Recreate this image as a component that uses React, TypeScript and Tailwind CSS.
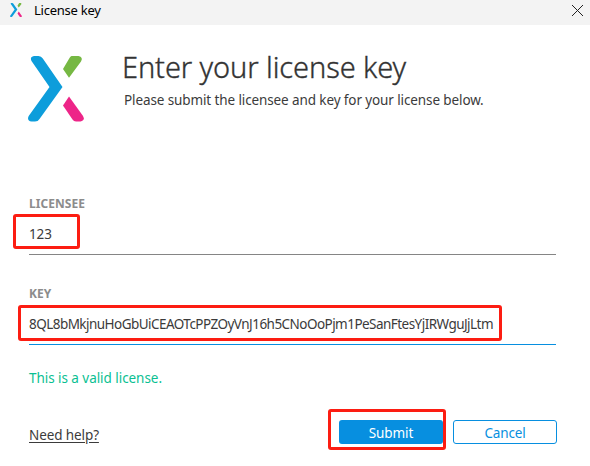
function Logo({ className }: { className: string }) {
  return (
    <svg className={className} viewBox="0 0 56 66" strokeLinejoin="round">
      <path fill="#0d9ddb" d="M6 0h4.500Q13.300 .2 14.800 2.500L34.500 31L11.500 63Q10 65.500 7 65.500H3.500Q-1.500 64.500 .7 60L21.500 31L3.500 5Q1.500 1 6 0Z" />
      <path fill="#76b843" d="M43.500 0H50.500Q55.500 1 53 5.500L41 21.800L35 13L41.500 2Q42.300 .4 43.500 0Z" />
      <path fill="#ed2588" d="M41 40.500L55 60Q57.500 64.500 52.500 65.500H48Q45.800 65.300 44.500 63.500L35 49.500Z" />
    </svg>
  );
}

function Field({ label, value, active }: { label: string; value: string; active?: boolean }) {
  return (
    <label className="block h-[90px]">
      <span className="block h-4 pt-px text-[12px] leading-4 font-bold tracking-[0.05px] text-[#8c8c8c]">
        {label}
      </span>
      <span
        className={`flex h-[44px] items-center border-b pt-[3px] text-[13.5px] whitespace-nowrap ${
          active ? "border-[#078fe0] tracking-[-0.54px]" : "border-[#858585] tracking-[-0.1px]"
        }`}
      >
        {value}
      </span>
    </label>
  );
}

export default function App() {
  return (
    <div className="relative h-[466px] w-[590px] overflow-hidden bg-white font-['Noto_Sans',sans-serif] text-[#3b3b3b]">
      <header className="flex h-[25px] items-center bg-[#f3f3f3] pr-[7px] pb-[5px] pl-[10px]">
        <Logo className="h-[14px] w-[12px]" />
        <h2 className="ml-3 text-[13px] leading-5 tracking-[-0.25px] text-black">License key</h2>
        <svg className="ml-auto size-[11px]" viewBox="0 0 11 11" stroke="#222">
          <path d="M0 0L11 11M11 0L0 11" />
        </svg>
      </header>
      <main className="pr-[34px] pl-[29px]">
        <section className="-ml-px flex h-[170px] pt-[31px]">
          <Logo className="h-[66px] w-[56px] shrink-0" />
          <div className="ml-[38px] whitespace-nowrap">
            <h1 className="-mt-[7px] text-[29px] leading-9 font-light tracking-[-0.1px] text-[#333] [-webkit-text-stroke:0.35px_#333]">Enter your license key</h1>
            <p className="ml-[2px] pt-[5px] text-[13.5px] leading-5 tracking-[-0.11px]">Please submit the licensee and key for your license below.</p>
          </div>
        </section>
        <Field label="LICENSEE" value="123" />
        <Field label="KEY" value="8QL8bMkjnuHoGbUiCEAOTcPPZOyVnJ16h5CNoOoPjm1PeSanFtesYjIRWguJjLtm" active />
        <p className="-mt-[8px] h-[53px] pt-px text-[13.5px] leading-5 tracking-[-0.05px] text-[#0abf92]">This is a valid license.</p>
        <footer className="-mr-px flex h-6 items-center text-[13.5px] leading-5">
          <a className="mt-[5px] tracking-[-0.1px] underline underline-offset-2">Need help?</a>
          <button className="ml-auto h-6 w-[104px] rounded-[3px] bg-[#078fe0] pt-px tracking-[-0.05px] text-white">Submit</button>
          <button className="ml-[10px] h-6 w-[104px] rounded-[3px] border border-[#078fe0] pt-[2px] tracking-[-0.15px] text-[#078fe0]">Cancel</button>
        </footer>
      </main>
      <div className="absolute top-[214px] left-[13px] h-[35px] w-[67px] rounded-[3px] border-3 border-[#fc1d12]" />
      <div className="absolute top-[305px] left-[18px] h-[36px] w-[484px] rounded-[3px] border-3 border-[#fc1d12]" />
      <div className="absolute top-[409px] left-[328px] h-[41px] w-[118px] rounded-[3px] border-3 border-[#fc1d12]" />
    </div>
  );
}
